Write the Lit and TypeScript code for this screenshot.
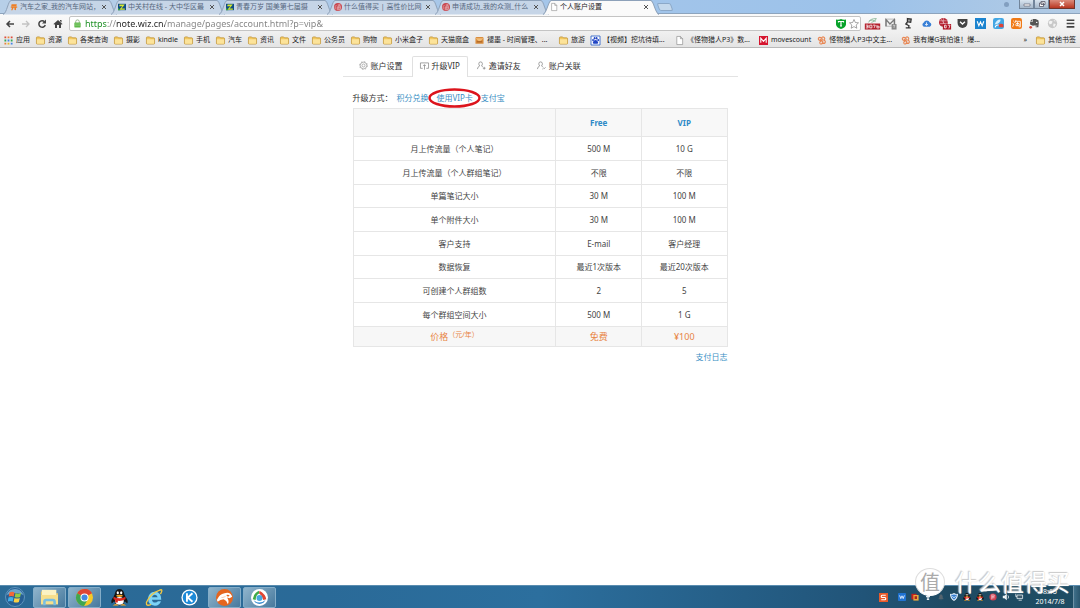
import { LitElement, html, css, svg, nothing } from "lit";
import { customElement } from "lit/decorators.js";
import { classMap } from "lit/directives/class-map.js";

const FONT = css`"Noto Sans", "Noto Sans CJK SC", sans-serif`;

const shapes: Record<string, unknown> = {
  home: svg`<path d="M2 9h16v3H2zM4 3h13l-1 5H3zM5 12h4l-3 6H3zM11 12h4v6l-4-1z" fill="#ee7f26"/>`,
  zol: svg`<path d="M0 2h20v16H0z" fill="#0f4d88"/><path d="M4 4h13L9 14h8v3H3l8-9H3z" fill="#d7ea2c"/><path d="M0 12l6 6H0z" fill="#38a53c"/>`,
  smzdm: svg`<circle cx="10" cy="10" r="10" fill="#c8454d"/><path d="M6 5L3 9v7M9 5h8M13 3v4M10 8h6v7h-6zM10 11h6M8 9v8h9" stroke="#f5dfe2" stroke-width="1.200" fill="none"/>`,
  page: svg`<path d="M4 1h8l5 5v13H4zM12 1v5h5" fill="#fff" stroke="#8d8d8d" stroke-width="1.500"/>`,
  folder: svg`<path d="M1 4q0-2 2-2h5l2 2h7q2 0 2 2v10q0 2-2 2H3q-2 0-2-2z" fill="#f2c85f" stroke="#b98a2b" stroke-width="1.500"/><path d="M2 7h16v9q0 1-1 1H3q-1 0-1-1z" fill="#fce39a"/>`,
  apps: svg`<path d="M1 1h4v4H1zM15 1h4v4h-4z" fill="#dd4b39"/><path d="M8 1h4v4H8zM1 15h4v4H1z" fill="#e8833a"/><path d="M1 8h4v4H1zM15 8h4v4h-4z" fill="#35a853"/><path d="M8 8h4v4H8zM15 15h4v4h-4z" fill="#4383e8"/><path d="M8 15h4v4H8z" fill="#e7b728"/>`,
  box: svg`<path d="M1 4l2-2h14l2 2v13H1z" fill="#d98d3d"/><path d="M1 5h18l-7 6H8z" fill="#f1bd77"/><path d="M4 12h12v2H4z" fill="#9c5720"/>`,
  paw: svg`<path d="M0 0h20v20H0z" fill="#fff" stroke="#3467c9" stroke-width="2"/><g fill="#2145c4"><ellipse cx="4.500" cy="9" rx="2" ry="2.600"/><ellipse cx="8" cy="5" rx="2" ry="2.600"/><ellipse cx="12.500" cy="5" rx="2" ry="2.600"/><ellipse cx="16" cy="9" rx="2" ry="2.600"/><path d="M10 9c3 0 6 4 6 6s-3 3-6 2c-3 1-6 0-6-2s3-6 6-6z"/></g>`,
  moves: svg`<path d="M0 0h20v20H0z" fill="#d5152f"/><path d="M4 15V5l6 7 6-7v10" stroke="#fff" stroke-width="2.400" fill="none"/>`,
  knot: svg`<g fill="none" stroke="#e88652" stroke-width="2.400"><path d="M10 10Q2 10 3 5q3-4 7 0 2-5 6-2 3 4-1 6 5 2 3 6-3 3-6 0-1 4-5 2-3-3 3-7z"/><path d="M7 7l7 7M13 6l-6 7"/></g>`,
  back: svg`<path d="M18 10H4M10 4l-6 6 6 6" stroke="#444" stroke-width="3" fill="none"/>`,
  forward: svg`<path d="M2 10h14M10 4l6 6-6 6" stroke="#c2c2c2" stroke-width="2.600" fill="none"/>`,
  reload: svg`<path d="M15 5.500A6.500 6.500 0 1 0 16.500 12" stroke="#444" stroke-width="3" fill="none"/><path d="M18 1v8h-8z" fill="#444"/>`,
  house: svg`<path d="M10 2l9 8-1.500 1.500L16 10v8h-4v-6H8v6H4v-8l-1.500 1.500L1 10zM14 2h3v5l-3-3z" fill="#444"/>`,
  lock: svg`<path d="M6 9V6q0-4 4-4t4 4v3" stroke="#8fae85" stroke-width="2" fill="none"/><rect x="3" y="8" width="14" height="11" rx="1" fill="#5fb94b"/><path d="M4 11h12M4 14h12" stroke="#a6dc98"/>`,
  shield: svg`<path d="M0 1q6 1 10-1 4 2 10 1v10q-1 6-10 9Q1 17 0 11z" fill="#08a32b"/><path d="M5 7V5h10v2M10 5v9M8 14h4" stroke="#fff" stroke-width="2.400" fill="none"/>`,
  star: svg`<path d="M10 1l2.700 6 6.300.7-4.700 4.300 1.300 6.500L10 15.200 4.400 18.500 5.700 12 1 7.700 7.300 7z" fill="#fff" stroke="#777" stroke-width="1.300"/>`,
  rss: svg`<path d="M3 8q2-7 14-7-2 6-9 7M4 5q6-3 12 1" stroke="#8bb89a" stroke-width="1.600" fill="none"/><path d="M-4 10h28v11H-4z" fill="#b3202c"/><path d="M-2 13h4v5h-4M-1 15.500h3M5 13h4v5H5zM11 13h4l-2 5M18 13v5h4v-3h-4" stroke="#fff" stroke-width="1.400" fill="none"/>`,
  mail: svg`<path d="M1 2h17v13H1z" fill="#f2f2f2" stroke="#888"/><path d="M2 15V3l7 8 8-8v12" stroke="#777" stroke-width="2.400" fill="none"/><rect x="12" y="11" width="9" height="10" fill="#888"/><path d="M14.500 14q1.500-2 3.500 0l-1.500 2v2" stroke="#fff" fill="none"/>`,
  lamp: svg`<path d="M8 1l7 1-1 6-6-1zM8 7l-3 4 6 3-1 4M5 18h9" stroke="#333" stroke-width="2.200" fill="#999"/>`,
  cloud: svg`<path d="M5 16a4.500 4.500 0 0 1 0-8 6 6 0 0 1 11 0 4.300 4.300 0 0 1 0 8z" fill="#3a80d6"/><path d="M10 8v5M7.500 11l2.500 2.500 2.500-2.500" stroke="#fff" stroke-width="1.500" fill="none"/>`,
  red: svg`<circle cx="8" cy="8" r="8" fill="#b62b39"/><path d="M8 0v14M2 5h12M2 10h12M4 2l8 12" stroke="#efc6cb" fill="none"/><path d="M7 11h15v10H7z" fill="#b01524"/><path d="M10 13h3v5h-3zM16 13h4l-2 6" stroke="#fff" stroke-width="1.400" fill="none"/>`,
  pocket: svg`<path d="M1 2h18v7a9 9 0 0 1-18 0z" fill="#444"/><path d="M5.500 7l4.500 4 4.500-4" stroke="#fff" stroke-width="2.400" fill="none"/>`,
  wblue: svg`<path d="M0 0h20v20H0z" fill="#1c84cf"/><path d="M4 6l3 8 3-7 3 7 3-8" stroke="#fff" stroke-width="2" fill="none"/>`,
  fresh: svg`<rect width="20" height="20" rx="4" fill="#43a7e4"/><path d="M3 12q4-10 11-9-1 7-11 9z" fill="#d5efff"/><path d="M10 14a5 4 0 0 1 9-2v5h-7z" fill="#df4337"/><path d="M4 17q1-5 6-4" stroke="#fff" stroke-width="2" fill="none"/>`,
  tao: svg`<rect width="20" height="20" rx="4" fill="#f07a17"/><path d="M4 5l2 2M3 10l2 1-2 5M9 4L7 9M8 6h9v10h-3M9 10h6M12 7v7M9 11v3h6v-3" stroke="#fff" stroke-width="1.500" fill="none"/>`,
  ever: svg`<path d="M7 2h5l5 2q2 5 0 13h-5v-4l-5 1-5-2V7h5z" fill="#555"/><path d="M12 17q0-3 3-3" stroke="#eee" fill="none"/><path d="M2 6l4-4v4z" fill="#555"/><circle cx="14" cy="8" r="1.300" fill="#fff"/><circle cx="3" cy="17" r="2.500" fill="#d94c3c"/>`,
  globe: svg`<circle cx="10" cy="10" r="8.500" fill="#c8c8c8"/><path d="M5 5l5 1-1 4-4 2-2-4zM12 10l4 1-2 5-3-1zM12 3l4 3h-3z" fill="#f3f3f3"/>`,
  menu: svg`<path d="M3 4h14M3 10h14M3 16h14" stroke="#444" stroke-width="3"/>`,
  gear: svg`<circle cx="10" cy="10" r="3.300" fill="none" stroke="#888" stroke-width="1.300"/><circle cx="10" cy="10" r="7.300" fill="none" stroke="#888" stroke-width="1.300"/><circle cx="10" cy="10" r="8.700" fill="none" stroke="#999" stroke-width="1.600" stroke-dasharray="3.400"/>`,
  upgrade: svg`<path d="M6 14H1V2h18v12h-5M10 17V6M7 9l3-3 3 3" fill="none" stroke="#777" stroke-width="1.500"/>`,
  invite: svg`<path d="M1 18q0-5 5-7-2-2-2-5 0-4 4-4t4 4q0 3-2 5l3 2M13 16h6M16 13v6" fill="none" stroke="#777" stroke-width="1.500"/>`,
  linkuser: svg`<path d="M1 18q0-5 5-7-2-2-2-5 0-4 4-4t4 4q0 3-2 5l3 2M12 18l3-3M15 18l4-4" fill="none" stroke="#777" stroke-width="1.500"/>`,
  start: svg`<circle cx="10" cy="10" r="9.500" fill="#265f93" stroke="#5d93bd"/><path d="M1.500 8a9 9 0 0 1 17 0q-8-4-17 0z" fill="#6da3c9"/><path d="M4.500 5.500q3-1.500 5 0L8.700 9.500q-2.500-1-5 0z" fill="#f2683a"/><path d="M10.500 6q2.500 1.300 5.500 0l-.9 4q-2.900 1.200-5.400 0z" fill="#93cb43"/><path d="M3.500 10.500q2.500-1 5 0L7.700 14.500q-2.200-1.200-4.900 0z" fill="#45aee8"/><path d="M9.500 11q2.500 1.200 5.300 0l-.9 4q-2.600 1.200-5.300 0z" fill="#fbd045"/>`,
  explorer: svg`<path d="M0 3h7l1 2h12v13H0z" fill="#e7c866"/><path d="M1 1h17v7H1z" fill="#fbf3c4"/><path d="M0 7h20v11H0z" fill="#f6df8c"/><path d="M4 19v-4q0-2 2-2h8q2 0 2 2v4" stroke="#79bfe2" stroke-width="3" fill="none"/>`,
  chrome: svg`<circle cx="10" cy="10" r="10" fill="#f5c928"/><path d="M10 10L1.300 5A10 10 0 0 1 18.700 5z" fill="#dd4435"/><path d="M10 0a10 10 0 0 1 8.700 5H10z" fill="#dd4435"/><path d="M10 10L1.300 5A10 10 0 0 0 9.500 20l4-7z" fill="#3fa650"/><circle cx="10" cy="10" r="4.700" fill="#fff"/><circle cx="10" cy="10" r="3.600" fill="#4487e0"/>`,
  qq: svg`<path d="M3 9Q-1 14 1 17l3-3zM17 9q4 5 2 8l-3-3z" fill="#161616"/><ellipse cx="10" cy="11" rx="7" ry="8" fill="#161616"/><ellipse cx="10" cy="6" rx="5.500" ry="6" fill="#161616"/><ellipse cx="10" cy="14" rx="5" ry="4.500" fill="#fff"/><path d="M3 9q7 4 14 0v3q-7 4-14 0zM5 12h3v4H5z" fill="#dc2920"/><ellipse cx="8" cy="4.500" rx="1.300" ry="1.800" fill="#fff"/><ellipse cx="12" cy="4.500" rx="1.300" ry="1.800" fill="#fff"/><ellipse cx="10" cy="8" rx="3.800" ry="1.300" fill="#f6a41f"/><path d="M2 19.500q4-4 7 0zM11 19.500q3-4 7 0z" fill="#f6a41f"/>`,
  ie: svg`<path d="M18 12.500H7q.6 3.500 3.800 3.500 2.200 0 3.200-1.500h3.600Q15.500 20 10.300 19.700 2.500 19 2.500 11.500 3 3.700 10.300 3.300q7.700.4 7.700 9.200zM7 9.700h6.700q-.5-3-3.300-3T7 9.700z" fill="#7cd3f7"/><path d="M17 6Q21-1 15.500 1.500 5 5 .5 16q-.5 5 5.500 2" stroke="#f2c843" stroke-width="1.600" fill="none"/>`,
  kugou: svg`<circle cx="10" cy="10" r="9.500" fill="#fff"/><circle cx="10" cy="10" r="8" fill="#1d8ad8"/><path d="M7 5v10M13.500 5L8 10l5.500 5" stroke="#fff" stroke-width="2.200" fill="none"/>`,
  fox: svg`<circle cx="10" cy="10" r="10" fill="#e5651e"/><path d="M1 13Q4 6 10 5q7-2 9 4l-3 2-3-1q3 4 1 8l-2-4-3-2q-4 0-7 3z" fill="#fff"/><path d="M12 7q3-1 4 1l-2 1z" fill="#e5651e"/><path d="M5 11q4-3 7-2-3 1-7 2z" fill="#f6b38c"/>`,
  tri: svg`<circle cx="10" cy="10" r="10" fill="#fff"/><path d="M9 2Q3 5 2 12l3.500 1q0-6 4.500-8z" fill="#3faa48"/><path d="M10 2q7 4 8 10l-3.500 1q-1-5-5-8z" fill="#e24633"/><path d="M3 13q7 6 14 0l-2 3q-5 3-10 0z" fill="#3389cf"/><circle cx="10" cy="10.500" r="3.500" fill="#46a9df"/>`,
  sogou: svg`<path d="M0 0h20v20H0z" fill="#e85a2b"/><path d="M15 5H7q-2 0-2 2.500T7 10h6q2 0 2 2.500T13 15H5" stroke="#fff" stroke-width="2.600" fill="none"/>`,
  wtray: svg`<rect width="20" height="20" rx="2" fill="#1f72d2"/><path d="M4 6l3 8 3-7 3 7 3-8" stroke="#fff" stroke-width="2" fill="none"/>`,
  cards: svg`<path d="M1 2h13v14H1z" fill="#c5221c"/><path d="M6 5h13v14H6z" fill="#eaa83f"/><path d="M9 8h6v7H9z" fill="#aa251c"/>`,
  pin: svg`<path d="M10 3v14M5 9h10M7 16h6" stroke="#e8eef2" stroke-width="3"/>`,
  bell: svg`<path d="M4 15q3-2 2-6 1-5 4-5t4 5q-1 4 2 6zM8 17h4" fill="#53646f" stroke="#53646f"/>`,
  guard: svg`<path d="M10 0q5 3 10 2 0 13-10 18Q0 15 0 2q5 1 10-2z" fill="#e9f3fc"/><path d="M10 3q3 2 7 1 0 9-7 13-7-4-7-13 4 1 7-1z" fill="#3680d2"/><path d="M6 8l4 4 4-4" stroke="#fff" stroke-width="2" fill="none"/>`,
  ring: svg`<circle cx="10" cy="10" r="9" fill="#cd3e4f"/><path d="M7 4v12M7 5h6v4H7M7 12h7" stroke="#f3c7ce" stroke-width="2" fill="none"/>`,
  sound: svg`<path d="M2 7h4l6-5v16l-6-5H2z" fill="#eef3f6"/><path d="M15 6q3 4 0 8" stroke="#eef3f6" stroke-width="2" fill="none"/>`,
  net: svg`<path d="M5 5h14v9H5zM2 2v7h3M9 18h8" stroke="#e6edf1" stroke-width="2" fill="#3d5a6c"/>`,
};

@customElement("ui-icon")
class UiIcon extends LitElement {
  static properties = { name: {} };
  static styles = css`
    :host { display: block; flex: none; width: 9px; height: 9px; }
    svg { display: block; width: 100%; height: 100%; overflow: visible; }
  `;
  declare name: string;
  render() {
    return html`<svg viewBox="0 0 20 20" aria-hidden="true">${shapes[this.name] ?? nothing}</svg>`;
  }
}

const tabs = [
  ["home", "汽车之家_我的汽车网站，"],
  ["zol", "中关村在线 - 大中华区最"],
  ["zol", "青春万岁 国美第七届摄"],
  ["smzdm", "什么值得买 | 高性价比网"],
  ["smzdm", "申请成功_我的众测_什么"],
  ["page", "个人账户设置"],
];

@customElement("browser-tabs")
class BrowserTabs extends LitElement {
  static styles = css`
    :host { display: flex; height: 14px; padding-left: 3px; background: linear-gradient(90deg, #b7cfe8, #a3c5ea 55%, #9cc2ea 80%, #b3cbe4); border-bottom: 1px solid #8da4bd; box-sizing: border-box; }
    .tab { position: relative; box-sizing: border-box; flex: 0 1 108px; min-width: 0; height: 14px; padding: 0 3px 0 7px; display: flex; align-items: center; gap: 2px; font: 7px/12px ${FONT}; color: #56677e; }
    .tab.active { color: #222; z-index: 1; flex-basis: 110px; }
    .shape { position: absolute; left: 0; top: 0; width: calc(100% + 6px); height: 14px; overflow: visible; }
    .shape path { fill: #c6d5e7; stroke: #8da1b9; vector-effect: non-scaling-stroke; }
    .active .shape path { fill: #fafafa; }
    .tab ui-icon { position: relative; width: 8px; height: 8px; }
    .title { position: relative; flex: 1; min-width: 0; overflow: hidden; white-space: nowrap; }
    .close { position: relative; border: 0; padding: 0; background: none; width: 8px; height: 8px; }
    .close svg { display: block; width: 8px; height: 8px; }
    .new { border: 1px solid #8ba8c8; border-radius: 2px; background: #c4d8ec; width: 14px; height: 8px; margin: 3px 0 0 5px; padding: 0; transform: skewX(20deg); }
    .controls { margin-left: auto; margin-right: 5px; display: flex; height: 9px; }
    .controls button { box-sizing: border-box; width: 15px; height: 9px; padding: 0; border: 1px solid #71849a; border-top: 0; background: linear-gradient(#d9e4ef, #a5b7ca); display: flex; align-items: center; justify-content: center; }
    .controls button:last-child { width: 26px; background: linear-gradient(#dc8c7c, #b93621); border-color: #70342c; }
    .controls svg { width: 8px; height: 6px; }
    .spot { width: 5px; height: 5px; margin: 2px 10px 0 0; border-radius: 50%; background: #829fc0; }
  `;
  render() {
    return html`
      ${tabs.map(([icon, title], i) => html`
        <div class=${classMap({ tab: true, active: i === tabs.length - 1 })}>
          <svg class="shape" viewBox="0 0 114 14" preserveAspectRatio="none"><path d="M0 14.500C4 13 5 1 8 .5H106C109 1 110 13 114 14.500"/></svg>
          <ui-icon name=${icon}></ui-icon>
          <span class="title">${title}</span>
          <button class="close" aria-label="关闭"><svg viewBox="0 0 8 8"><path d="M2 2l4 4M6 2L2 6" stroke="#555" stroke-width="1"/></svg></button>
        </div>`)}
      <button class="new" aria-label="新标签页"></button>
      <div class="controls">
        <span class="spot"></span>
        <button aria-label="最小化"><svg viewBox="0 0 8 6"><path d="M1 3h6v2H1z" fill="#fff" stroke="#556" stroke-width=".6"/></svg></button>
        <button aria-label="还原"><svg viewBox="0 0 8 6"><path d="M3 .5h4v3H3zM1.500 2h4v3.500h-4z" fill="#fff" stroke="#556" stroke-width=".8"/></svg></button>
        <button aria-label="关闭窗口"><svg viewBox="0 0 8 6"><path d="M2 1l4 4M6 1L2 5" stroke="#fff" stroke-width="1.500"/></svg></button>
      </div>`;
  }
}

const extensions = ["rss", "mail", "lamp", "cloud", "red", "pocket", "wblue", "fresh", "tao", "ever", "globe", "menu"];

@customElement("browser-toolbar")
class BrowserToolbar extends LitElement {
  static styles = css`
    :host { display: flex; align-items: center; height: 19px; box-sizing: border-box; padding: 0 4px 0 5px; background: linear-gradient(#fafafa, #efefef); }
    button { border: 0; padding: 0; background: none; display: block; }
    .nav { display: flex; gap: 6px; width: 64px; }
    .nav ui-icon { width: 10px; height: 10px; }
    .omnibox { flex: 1; display: flex; align-items: center; gap: 3px; height: 15px; box-sizing: border-box; border: 1px solid #c4c4c4; border-radius: 2px; background: #fff; padding: 0 1px 0 3px; }
    .omnibox ui-icon { width: 9px; height: 9px; }
    .omnibox .end { width: 10px; height: 10px; }
    input { flex: 1; min-width: 0; border: 0; padding: 0; outline: 0; height: 13px; font: 9px/13px ${FONT}; color: #777; background: linear-gradient(90deg, #168c1d 23px, #888 23px 31px, #222 31px 80px, #808080 80px); background-clip: text; -webkit-text-fill-color: transparent; }
    .ext { display: flex; gap: 7px; margin-left: 6px; }
    .ext ui-icon { width: 11px; height: 11px; }
  `;
  render() {
    return html`
      <div class="nav">
        ${[["back", "后退"], ["forward", "前进"], ["reload", "刷新"], ["house", "主页"]].map(([n, l]) => html`<button aria-label=${l}><ui-icon name=${n}></ui-icon></button>`)}
      </div>
      <div class="omnibox">
        <ui-icon name="lock"></ui-icon>
        <input aria-label="地址" type="text" spellcheck="false" value="https://note.wiz.cn/manage/pages/account.html?p=vip&amp;" />
        <ui-icon class="end" name="shield"></ui-icon>
        <ui-icon class="end" name="star"></ui-icon>
      </div>
      <div class="ext">
        ${extensions.map((n) => html`<button aria-label=${n}><ui-icon name=${n}></ui-icon></button>`)}
      </div>`;
  }
}

const bookmarks: [string, string, boolean?][] = [
  ["apps", "应用"], ["folder", "资源"], ["folder", "各类查询"], ["folder", "摄影"], ["folder", "kindle"],
  ["folder", "手机"], ["folder", "汽车"], ["folder", "资讯"], ["folder", "文件"], ["folder", "公务员"],
  ["folder", "购物"], ["folder", "小米盒子"], ["folder", "天猫魔盒"], ["box", "褪墨 - 时间管理、...", true],
  ["folder", "旅游"], ["paw", "【视频】挖坑待填...", true], ["page", "《怪物猎人P3》数...", true],
  ["moves", "movescount"], ["knot", "怪物猎人P3中文主...", true], ["knot", "我有爆G我怕谁！爆...", true],
];

@customElement("bookmark-bar")
class BookmarkBar extends LitElement {
  static styles = css`
    :host { display: flex; align-items: center; gap: 6px; height: 15px; box-sizing: border-box; padding: 0 4px 0 4px; border-bottom: 1px solid #b9b9b9; background: linear-gradient(#efefef, #e4e4e4); font: 7px/14px ${FONT}; white-space: nowrap; }
    a { display: flex; align-items: center; gap: 3px; color: #222; text-decoration: none; flex: none; }
    .wide { width: 78px; }
    .more { margin: 0 3px 0 auto; border: 0; padding: 0; background: none; font: inherit; color: #333; }
  `;
  render() {
    return html`
      ${bookmarks.map(([icon, label, wide]) => html`<a href="#" class=${classMap({ wide: !!wide })}><ui-icon name=${icon}></ui-icon><span>${label}</span></a>`)}
      <button class="more" aria-label="更多书签">»</button>
      <a href="#"><ui-icon name="folder"></ui-icon><span>其他书签</span></a>`;
  }
}

const navItems = [["gear", "账户设置"], ["upgrade", "升级VIP"], ["invite", "邀请好友"], ["linkuser", "账户关联"]];
const rows = [
  ["月上传流量（个人笔记）", "500 M", "10 G"],
  ["月上传流量（个人群组笔记）", "不限", "不限"],
  ["单篇笔记大小", "30 M", "100 M"],
  ["单个附件大小", "30 M", "100 M"],
  ["客户支持", "E-mail", "客户经理"],
  ["数据恢复", "最近1次版本", "最近20次版本"],
  ["可创建个人群组数", "2", "5"],
  ["每个群组空间大小", "500 M", "1 G"],
];

@customElement("account-page")
class AccountPage extends LitElement {
  static styles = css`
    :host { display: block; flex: 1; background: #fff; padding: 8px 10px 0; font: 8px/12px ${FONT}; color: #444; }
    main { max-width: 395px; margin: 0 auto; }
    a { color: #3a8fc4; text-decoration: none; }
    nav { display: flex; border-bottom: 1px solid #e3e3e3; padding-left: 8px; }
    nav a { display: flex; align-items: center; gap: 3px; height: 20px; box-sizing: border-box; padding: 0 8px 1px; color: #333; }
    nav a.active { height: 21px; padding: 0 7px 2px; margin: 0 1px -1px; border: 1px solid #e0e0e0; border-bottom: 0; background: #fff; border-radius: 2px 2px 0 0; }
    .body { padding: 15px 10px 0; }
    .ways { display: flex; gap: 8px; height: 16px; line-height: 12px; color: #333; }
    .ways span { margin-right: -4px; }
    .picked { position: relative; }
    .mark { position: absolute; left: -9px; top: -4px; width: 53px; height: 20px; }
    table { width: 100%; border-collapse: collapse; table-layout: fixed; text-align: center; color: #444; }
    th, td { padding: 0; border: 1px solid #e6e6e6; font-weight: 400; }
    th:first-child { width: 54%; }
    thead th { height: 27px; background: #f8f8f8; color: #2d8ac7; font-weight: 700; }
    tbody td, tbody th { height: 23px; }
    tbody tr:nth-child(3n) > * { height: 22px; }
    tfoot th, tfoot td { height: 19px; background: #f7f7f7; color: #e88443; font-size: 9px; }
    tfoot sup { font-size: 7px; line-height: 0; vertical-align: 3px; }
    .log { text-align: right; margin-top: 4px; }
  `;
  render() {
    return html`<main>
      <nav>
        ${navItems.map(([icon, label], i) => html`<a href="#" class=${classMap({ active: i === 1 })}><ui-icon name=${icon}></ui-icon><span>${label}</span></a>`)}
      </nav>
      <div class="body">
        <div class="ways">
          <span>升级方式：</span>
          <a href="#">积分兑换</a>
          <a href="#" class="picked">使用VIP卡<svg class="mark" viewBox="0 0 53 20"><ellipse cx="26.500" cy="10" rx="25" ry="8.500" fill="none" stroke="#dc141c" stroke-width="2.400"/></svg></a>
          <a href="#">支付宝</a>
        </div>
        <table>
          <thead><tr><th></th><th>Free</th><th>VIP</th></tr></thead>
          <tbody>${rows.map(([name, free, vip]) => html`<tr><th>${name}</th><td>${free}</td><td>${vip}</td></tr>`)}</tbody>
          <tfoot><tr><th>价格<sup>（元/年）</sup></th><td>免费</td><td>¥100</td></tr></tfoot>
        </table>
        <div class="log"><a href="#">支付日志</a></div>
      </div>
    </main>`;
  }
}

const apps: [string, boolean][] = [["explorer", true], ["chrome", true], ["qq", false], ["ie", false], ["kugou", false], ["fox", true], ["tri", true]];
const tray = ["wtray", "cards", "pin", "bell", "guard", "qq", "qq", "ring", "sound", "net"];

@customElement("task-bar")
class TaskBar extends LitElement {
  static styles = css`
    :host { position: relative; display: flex; align-items: center; height: 23px; box-sizing: border-box; padding-left: 5px; border-top: 1px solid #5a8db0; background: linear-gradient(90deg, #2b6a96, #2a6a98 30%, #2c6f9e 50%, #215478 80%, #1e4a62 88%, #1f4d64); color: #fff; font: 7px/10px ${FONT}; }
    button { border: 0; padding: 0; background: none; display: flex; align-items: center; justify-content: center; }
    ui-icon { width: 17px; height: 17px; }
    .start ui-icon { width: 20px; height: 20px; }
    .apps { display: flex; gap: 2px; margin-left: 8px; }
    .apps button { box-sizing: border-box; width: 33px; height: 21px; border: 1px solid transparent; border-radius: 2px; }
    .apps .open { border-color: #84adc8; background: linear-gradient(135deg, #8fb4cc, #47799d); }
    .tray { display: flex; align-items: center; gap: 5px; margin-left: auto; }
    .tray ui-icon { width: 8px; height: 8px; }
    .tray .ime { width: 9px; height: 9px; margin-right: 5px; }
    .clock { width: 46px; margin-left: 4px; text-align: center; line-height: 10px; }
    .desk { width: 7px; height: 22px; border-left: 1px solid #6f92a6; background: linear-gradient(90deg, #3f6f89, #2a566e); box-sizing: border-box; }
    .brand { position: absolute; right: 10px; bottom: 8px; display: flex; align-items: center; gap: 10px; color: #fff; font: 400 23px/36px ${FONT}; text-shadow: -1px -1px 1px #c8c8c8, 0 0 1px #c8c8c8; }
    .seal { width: 30px; height: 28px; border-radius: 50%; line-height: 27px; text-align: center; font-size: 20px; color: #aaa; text-shadow: none; background: #fff; border: 1px solid #ddd; border-bottom-color: #fff; box-sizing: border-box; }
  `;
  render() {
    return html`
      <button class="start" aria-label="开始"><ui-icon name="start"></ui-icon></button>
      <div class="apps">${apps.map(([n, open]) => html`<button class=${classMap({ open })} aria-label=${n}><ui-icon name=${n}></ui-icon></button>`)}</div>
      <div class="tray">
        <ui-icon class="ime" name="sogou"></ui-icon>
        ${tray.map((n) => html`<ui-icon name=${n}></ui-icon>`)}
      </div>
      <div class="clock"><div>8:15</div><div>2014/7/8</div></div>
      <button class="desk" aria-label="显示桌面"></button>
      <div class="brand"><span class="seal">值</span><span>什么值得买</span></div>`;
  }
}

@customElement("app-root")
class AppRoot extends LitElement {
  static styles = css`
    :host { display: flex; flex-direction: column; min-height: 100vh; overflow: hidden; }
  `;
  render() {
    return html`
      <browser-tabs></browser-tabs>
      <browser-toolbar></browser-toolbar>
      <bookmark-bar></bookmark-bar>
      <account-page></account-page>
      <task-bar></task-bar>`;
  }
}
